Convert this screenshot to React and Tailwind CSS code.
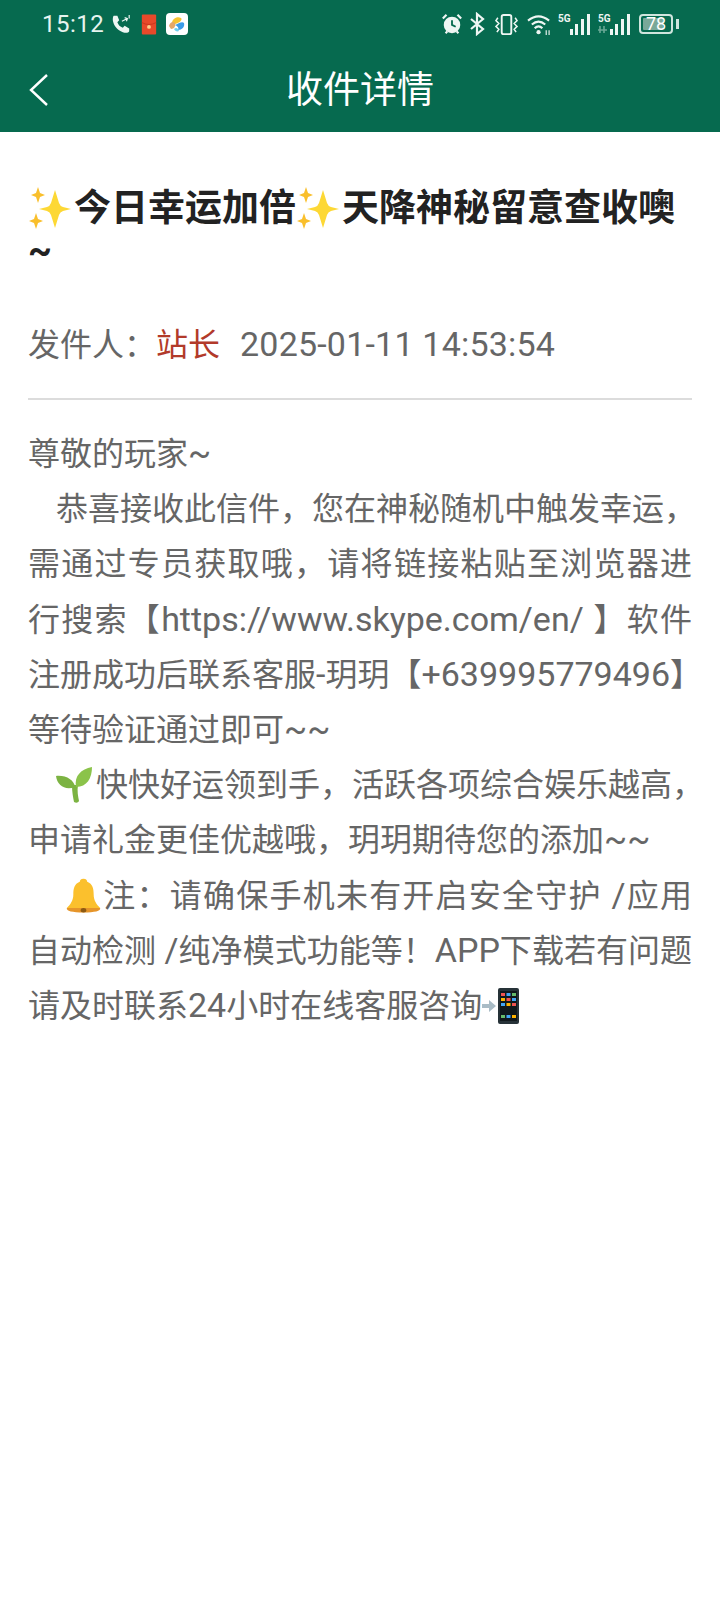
const Sparkle = () => (
  <svg viewBox="0 0 44 44" className="inline-block w-[44px] h-[44px] mr-[2px] -my-[5px] align-[-4px]">
    <path d="M27 4 L31 17 Q32 20 35 21 L43 23 L35 25 Q32 26 31 29 L27 42 L23 29 Q22 26 19 25 L11 23 L19 21 Q22 20 23 17 Z" fill="#fdd835" />
    <path d="M10 1 L12 7 L17 9 L12 11 L10 17 L8 11 L3 9 L8 7 Z" fill="#f9bf2c" />
    <path d="M8 27 L10 33 L15 35 L10 37 L8 43 L6 37 L1 35 L6 33 Z" fill="#f9bf2c" />
  </svg>
);

const Sprout = () => (
  <svg viewBox="0 0 36 36" className="inline-block w-[36px] h-[36px] mr-[4px] -my-[2px] align-[-5px]">
    <path d="M16 18 C16 25 17 30 18 35 C20 36 22 36 23 34 C22 29 21 24 22 18 Z" fill="#7cb342" />
    <path d="M20 20 C18 9 25 2 36 0 C36 11 31 20 20 20 Z" fill="#8bc34a" />
    <path d="M19 20 C18 13 10 8 0 9 C1 18 9 24 19 20 Z" fill="#7cb342" />
  </svg>
);

const Bell = () => (
  <svg viewBox="0 0 40 48" preserveAspectRatio="none" className="inline-block w-[37px] h-[36px] -my-[2px] align-[-5px]">
    <path d="M20 1 C17 1 16 3 16 5 C10 8 9 14 9 22 C9 30 6 35 2 40 L38 40 C34 35 31 30 31 22 C31 14 30 8 24 5 C24 3 23 1 20 1 Z" fill="#fbc02d" />
    <path d="M2 40 C1 44 8 46 20 46 C32 46 39 44 38 40 Z" fill="#e6952a" />
    <circle cx="20" cy="43" r="3" fill="#8d5a12" />
  </svg>
);

const PhoneArrow = () => (
  <svg viewBox="0 0 38 36" className="inline-block w-[38px] h-[36px] -my-[2px] align-[-5px]">
    <path d="M0 16 L7 16 L7 12 L14 18 L7 24 L7 20 L0 20 Z" fill="#a9bcc6" />
    <rect x="16" y="0" width="21" height="36" rx="2" fill="#263238" />
    <rect x="18" y="3" width="17" height="30" fill="#10181c" />
    <rect x="19" y="5" width="4" height="3" fill="#ef5350" />
    <rect x="24.5" y="5" width="4" height="3" fill="#42a5f5" />
    <rect x="30" y="5" width="4" height="3" fill="#66bb6a" />
    <rect x="19" y="10" width="4" height="3" fill="#ffb300" />
    <rect x="24.5" y="10" width="4" height="3" fill="#ef5350" />
    <rect x="30" y="10" width="4" height="3" fill="#42a5f5" />
    <rect x="19" y="15" width="4" height="3" fill="#42a5f5" />
    <rect x="24.5" y="15" width="4" height="3" fill="#ffb300" />
    <rect x="30" y="15" width="4" height="3" fill="#ef5350" />
    <rect x="19" y="27" width="4" height="3" fill="#66bb6a" />
    <rect x="24.5" y="27" width="4" height="3" fill="#42a5f5" />
    <rect x="30" y="27" width="4" height="3" fill="#ffb300" />
  </svg>
);

// latin text runs a little larger than the CJK around it
const Lat = ({ children }) => <span className="text-[34px] leading-none">{children}</span>;

// full lines in the message are justified to the column edge
const Fit = ({ children }) => <div className="[text-align:justify] [text-align-last:justify]">{children}</div>;

// signal bars with a small 5G label
const Signal = ({ faded, className }) => (
  <svg viewBox="0 0 33 22" className={className}>
    <text x="0" y="9" fontSize="10" fontWeight="700" fill="#eef6f3" fontFamily="Roboto, sans-serif">5G</text>
    {faded && <path d="M2 13 L2 20 M6 13 L6 20 M0 17 L9 17" stroke="#6aa896" strokeWidth="1.6" />}
    <rect x="12" y="16" width="3" height="6" fill="#eef6f3" />
    <rect x="17" y="11" width="3" height="11" fill="#eef6f3" />
    <rect x="23" y="6" width="3" height="16" fill="#eef6f3" />
    <rect x="29" y="1" width="3" height="21" fill="#eef6f3" />
  </svg>
);

function StatusBar() {
  return (
    <div className="h-[48px] flex items-center justify-between pl-[42px] pr-[41px] text-[#e6f4ef]">
      <div className="flex items-center">
        <span className="text-[24px] leading-none tracking-[0.5px] font-['Roboto',sans-serif]">15:12</span>
        <svg viewBox="0 0 22 22" className="w-[20px] h-[20px] ml-[7px]">
          <path d="M3 2 L7 2 L9 7 L7 9 C8 12 10 14 13 15 L15 13 L20 16 L20 19 C19 21 16 21 13 20 C7 18 3 13 2 7 C2 5 2 3 3 2 Z" fill="#eef6f3" />
          <path d="M12 8 L18 5 M15 4 L18 5 L17 8 M20 1 L20 5" stroke="#eef6f3" strokeWidth="1.3" fill="none" />
        </svg>
        <svg viewBox="0 0 16 22" className="w-[16px] h-[21px] ml-[10px]">
          <rect x="0.5" y="0.5" width="15" height="21" rx="1" fill="#e8492a" />
          <path d="M0.5 9 Q8 13 15.5 9" stroke="#c9371c" strokeWidth="1" fill="none" />
          <circle cx="8" cy="13.5" r="2" fill="#ffcf8a" />
        </svg>
        <div className="w-[22px] h-[22px] ml-[9px] rounded-[4px] bg-white flex items-center justify-center">
          <svg viewBox="0 0 18 18" className="w-[18px] h-[18px]">
            <path d="M4 8 C4 4 9 1 13 3 C15 5 11 8 7 9 Z" fill="#f6c331" />
            <path d="M1 11 C2 7 5 6 7 8 C8 11 6 14 3 14 Z" fill="#e5a868" />
            <path d="M7 10 C10 9 14 6 16 8 C17 12 14 15 10 15 C11 13 10 11 7 10 Z" fill="#3a9be8" />
            <path d="M6 14 C8 12 10 13 11 16 C9 17 7 16 6 14 Z" fill="#6fd0ef" />
          </svg>
        </div>
      </div>
      <div className="flex items-center">
        <svg viewBox="0 0 24 24" className="w-[22px] h-[22px]">
          <circle cx="12" cy="13" r="9" fill="#eef6f3" />
          <path d="M2 6 L6 2 M22 6 L18 2 M5 22 L7 20 M19 22 L17 20" stroke="#eef6f3" strokeWidth="2.4" />
          <path d="M12 8 L12 13 L16 15" stroke="#066a4f" strokeWidth="2" fill="none" />
        </svg>
        <svg viewBox="0 0 16 24" className="w-[16px] h-[24px] ml-[6px]" fill="none" stroke="#eef6f3" strokeWidth="2.2">
          <path d="M2 7 L14 17 L8 22 L8 2 L14 7 L2 17" />
        </svg>
        <svg viewBox="0 0 26 24" className="w-[25px] h-[23px] ml-[9px]" fill="none" stroke="#eef6f3" strokeWidth="2">
          <rect x="8" y="2" width="10" height="20" rx="2" />
          <path d="M4 5 L2 8 L5 11 L2 14 L5 17 L3 20 M22 5 L24 8 L21 11 L24 14 L21 17 L23 20" strokeWidth="1.6" />
        </svg>
        <svg viewBox="0 0 26 24" className="w-[25px] h-[23px] ml-[8px]" fill="none" stroke="#eef6f3" strokeWidth="2.2">
          <path d="M1 8 Q12 -1 23 8 M5 12 Q12 6 19 12 M8 16 Q12 12 16 16" />
          <circle cx="12" cy="20" r="2.2" fill="#eef6f3" stroke="none" />
          <path d="M20 18 L20 23 M23 18 L23 23" strokeWidth="1.2" />
        </svg>
        <Signal className="w-[33px] h-[22px] ml-[6px]" />
        <Signal faded className="w-[33px] h-[22px] ml-[7px]" />
        <div className="flex items-center ml-[8px]">
          <div className="w-[34px] h-[20px] rounded-[4px] border-2 border-[#cfe5dd] p-[2px]">
            <div className="relative w-[78%] h-full rounded-[1px] bg-[#79a898]">
              <span className="absolute left-[3px] top-[-3px] text-[18px] leading-[18px] text-white font-['Roboto',sans-serif]">78</span>
            </div>
          </div>
          <div className="w-[3px] h-[10px] ml-[3px] bg-[#cfe5dd]" />
        </div>
      </div>
    </div>
  );
}

export default function App() {
  return (
    <div className="min-h-[1612px] bg-white font-['Roboto','Noto_Sans_CJK_SC',sans-serif]">
      {/* Header */}
      <div className="bg-[#066a4f] h-[132px]">
        <StatusBar />
        <div className="relative h-[84px] flex items-center justify-center">
          <svg viewBox="0 0 20 34" className="absolute left-[29px] top-[25px] w-[20px] h-[34px]" fill="none" stroke="#ffffff" strokeWidth="2.4">
            <path d="M18 2 L2 17 L18 32" />
          </svg>
          <h1 className="text-[37px] leading-none text-white font-normal">收件详情</h1>
        </div>
      </div>

      <div className="px-[28px]">
        {/* Title */}
        <h2 className="pt-[56px] text-[37px] leading-[42px] font-bold text-[#222222] whitespace-nowrap">
          <Sparkle />今日幸运加倍<Sparkle />天降神秘留意查收噢
          <br />~
        </h2>

        {/* Sender */}
        <div className="mt-[49px] pb-[29px] border-b-2 border-[#dcdcdc] text-[32px] leading-[48px] text-[#666666] whitespace-nowrap">
          发件人：<span className="text-[#b23a2a]">站长</span><span className="ml-[20px] tracking-[0.2px]"><Lat>2025-01-11 14:53:54</Lat></span>
        </div>

        {/* Body */}
        <div className="mt-[27px] text-[32px] leading-[55.2px] text-[#666666] whitespace-nowrap">
          <p>尊敬的玩家<Lat>~</Lat></p>
          <div className="indent-[28px]">恭喜接收此信件，您在神秘随机中触发幸运，</div>
          <Fit>需通过专员获取哦，请将链接粘贴至浏览器进</Fit>
          <Fit>行搜索【<Lat>https://www.skype.com/en/ </Lat>】软件</Fit>
          <Fit>注册成功后联系客服<Lat>-</Lat>玥玥【<Lat>+639995779496</Lat>】</Fit>
          <div>等待验证通过即可<Lat>~~</Lat></div>
          <div className="indent-[28px]"><Sprout />快快好运领到手，活跃各项综合娱乐越高，</div>
          <div>申请礼金更佳优越哦，玥玥期待您的添加<Lat>~~</Lat></div>
          <div className="indent-[37px]"><Fit><Bell />注：请确保手机未有开启安全守护<Lat> /</Lat>应用</Fit></div>
          <Fit>自动检测<Lat> /</Lat>纯净模式功能等！<Lat>APP</Lat>下载若有问题</Fit>
          <div>请及时联系<Lat>24</Lat>小时在线客服咨询<PhoneArrow /></div>
        </div>
      </div>
    </div>
  );
}
